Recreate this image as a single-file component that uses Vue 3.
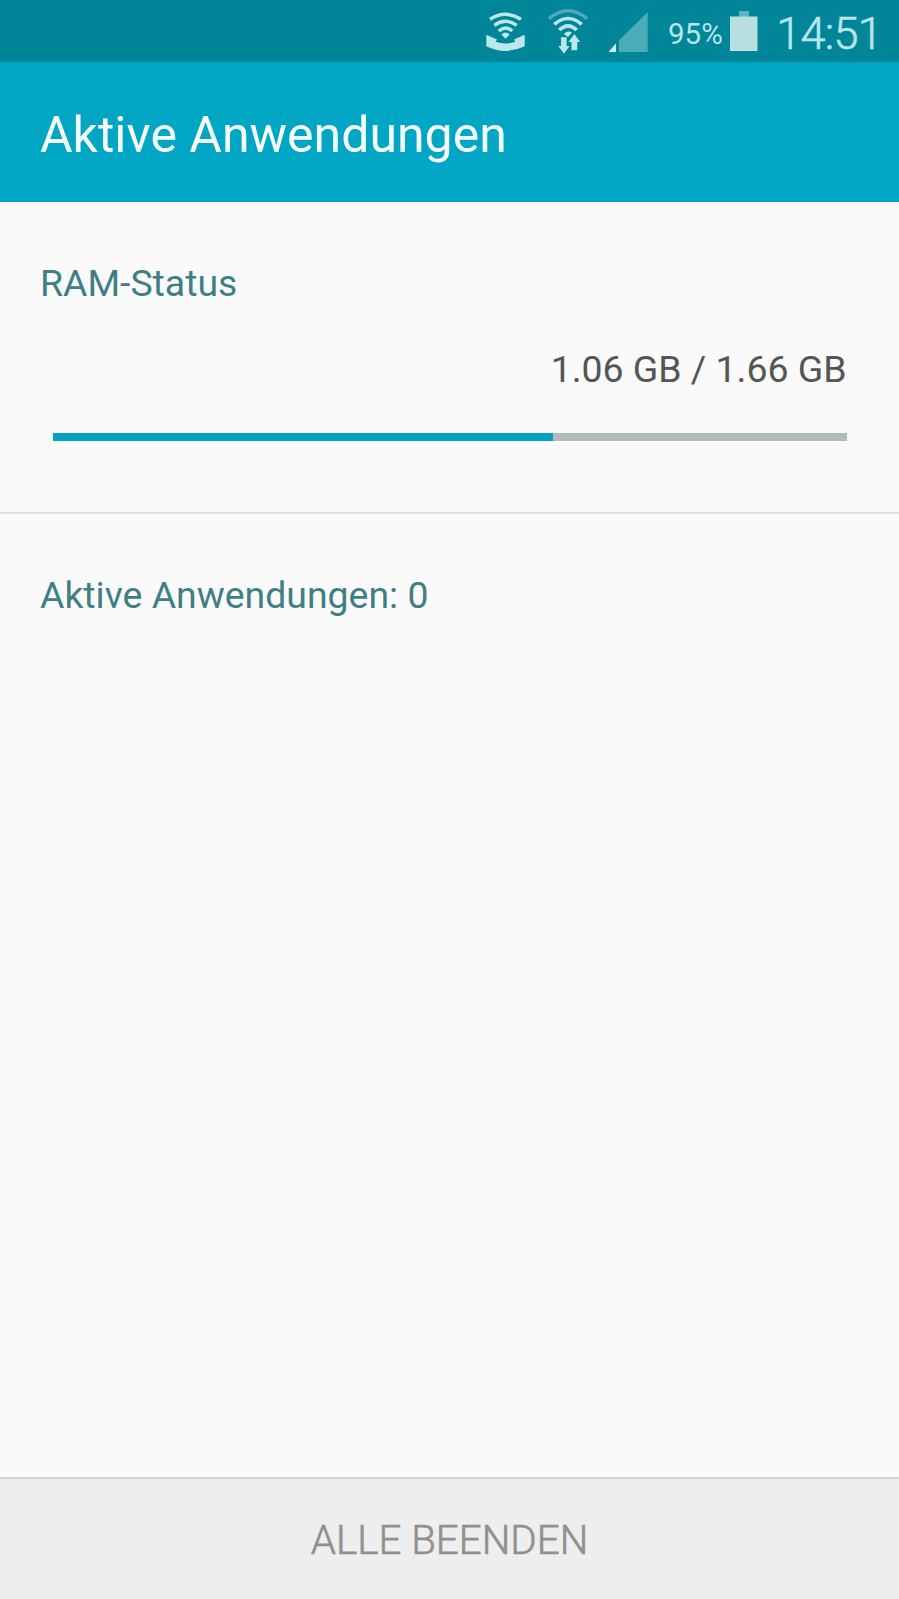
<template>
  <div class="screen">
    <div class="status-bar">
      <svg class="status-icons" width="190" height="62" viewBox="0 0 190 62">
        <!-- wifi calling -->
        <g fill="none" stroke="#bce7ea" stroke-width="3.400">
          <path d="M20 19.200Q35.500 9.400 51 19.200" />
          <path d="M24.300 25.300Q35.500 17.300 46.700 25.300" />
          <path d="M28.800 31Q35.500 24.900 42.200 31" />
        </g>
        <path d="M31.300 34.500Q35.500 30.600 39.700 34.500L35.500 38.800Z" fill="#bce7ea" />
        <path d="M16.300 34.800L27 39.500L25.700 41.800Q35.500 45.400 45.300 41.800L44 39.500L54.700 34.800V46.200Q35.500 55.700 16.300 46.200Z" fill="#bce7ea" />
        <!-- wifi with traffic arrows -->
        <path d="M79 18.600Q98 2.800 117 18.600" fill="none" stroke="#4daab9" stroke-width="3.500" />
        <g fill="none" stroke="#bce7ea" stroke-width="3.600">
          <path d="M84.300 24.400Q98 12.600 111.700 24.400" />
          <path d="M89.200 30Q98 21.800 106.800 30" />
        </g>
        <path d="M93.800 34Q98 30 102 32.600L98 37Z" fill="#bce7ea" />
        <path d="M91 37.300H96.600V46H99.600L94 53.700L88.200 46H91Z" fill="#bce7ea" />
        <path d="M104.300 34L110.200 42H107.300V50.300H101.500V42H98.500Z" fill="#bce7ea" />
        <!-- mobile signal -->
        <path d="M149 52V40.500L177.700 12V52Z" fill="#4daab9" />
        <path d="M138.500 52L146 43.300V52Z" fill="#cdeef0" />
      </svg>
      <span class="percent">{{ battery }}%</span>
      <svg class="battery" width="28" height="42" viewBox="0 0 28 42">
        <rect x="9" y="1" width="10" height="6" fill="#5fb3bf" />
        <rect x="0" y="6.500" width="27.500" height="34.500" fill="#b9dfe0" />
      </svg>
      <span class="clock">14:51</span>
    </div>

    <header class="app-bar">
      <h1>Aktive Anwendungen</h1>
    </header>

    <section class="ram">
      <h2>RAM-Status</h2>
      <p class="usage">{{ used.toFixed(2) }} GB / {{ total.toFixed(2) }} GB</p>
      <div class="track">
        <div class="fill" :style="{ width: percent + '%' }"></div>
      </div>
    </section>

    <section class="apps">
      <h2>Aktive Anwendungen: {{ apps.length }}</h2>
    </section>

    <button class="end-all" :disabled="!apps.length">ALLE BEENDEN</button>
  </div>
</template>

<script setup>
import { computed, ref } from 'vue'

const battery = ref(95)
const used = ref(1.06)
const total = ref(1.66)
const apps = ref([])

// whole percent, rounded down
const percent = computed(() => Math.floor((used.value / total.value) * 100))
</script>

<style>
body {
  margin: 0;
  background: #fafafa;
}
</style>

<style scoped>
.screen {
  display: flex;
  flex-direction: column;
  height: 1599px;
  overflow: hidden;
  background: #fafafa;
  font-family: Roboto, sans-serif;
}

h1,
h2,
p {
  margin: 0;
  font-weight: 400;
  white-space: nowrap;
}

.status-bar {
  display: flex;
  justify-content: flex-end;
  box-sizing: border-box;
  height: 62px;
  padding-right: 17px;
  background: #008599;
  color: #b9e6ea;
}

.status-icons {
  flex: none;
}

.percent {
  width: 62px;
  padding-left: 8px;
  box-sizing: border-box;
  font-size: 29.5px;
  line-height: 68px;
  white-space: nowrap;
}

.battery {
  flex: none;
  margin: 10px 0 0 8px;
}

.clock {
  width: 124px;
  text-align: right;
  font-size: 45px;
  font-weight: 300;
  letter-spacing: -0.7px;
  line-height: 67px;
  -webkit-text-stroke: 0.6px currentColor;
}

.app-bar {
  box-sizing: border-box;
  height: 140px;
  padding: 6px 40px 0;
  background: #00a6c3;
  color: #f5fcfd;
}

.app-bar h1 {
  font-size: 50px;
  line-height: 135px;
}

.ram {
  box-sizing: border-box;
  height: 312px;
  padding: 59px 52.5px 0 40px;
  border-bottom: 2px solid #e0e0e0;
}

h2 {
  color: #3f7f84;
  font-size: 37.4px;
  line-height: 44px;
}

.usage {
  margin-top: 42px;
  color: #555;
  font-size: 37.4px;
  line-height: 44px;
  text-align: right;
}

.track {
  height: 8px;
  margin: 42px 0 0 12.5px;
  background: #b0bcbc;
}

.fill {
  width: 0;
  height: 100%;
  background: #04a1c4;
}

.apps {
  flex: 1;
  padding: 59px 40px 0;
}

.end-all {
  height: 122px;
  padding: 3px 0 0;
  border: 0;
  border-top: 2px solid #d0d0d0;
  background: #eee;
  color: #909090;
  font-family: inherit;
  font-size: 40.3px;
  font-weight: 300;
  -webkit-text-stroke: 0.6px currentColor;
}
</style>
